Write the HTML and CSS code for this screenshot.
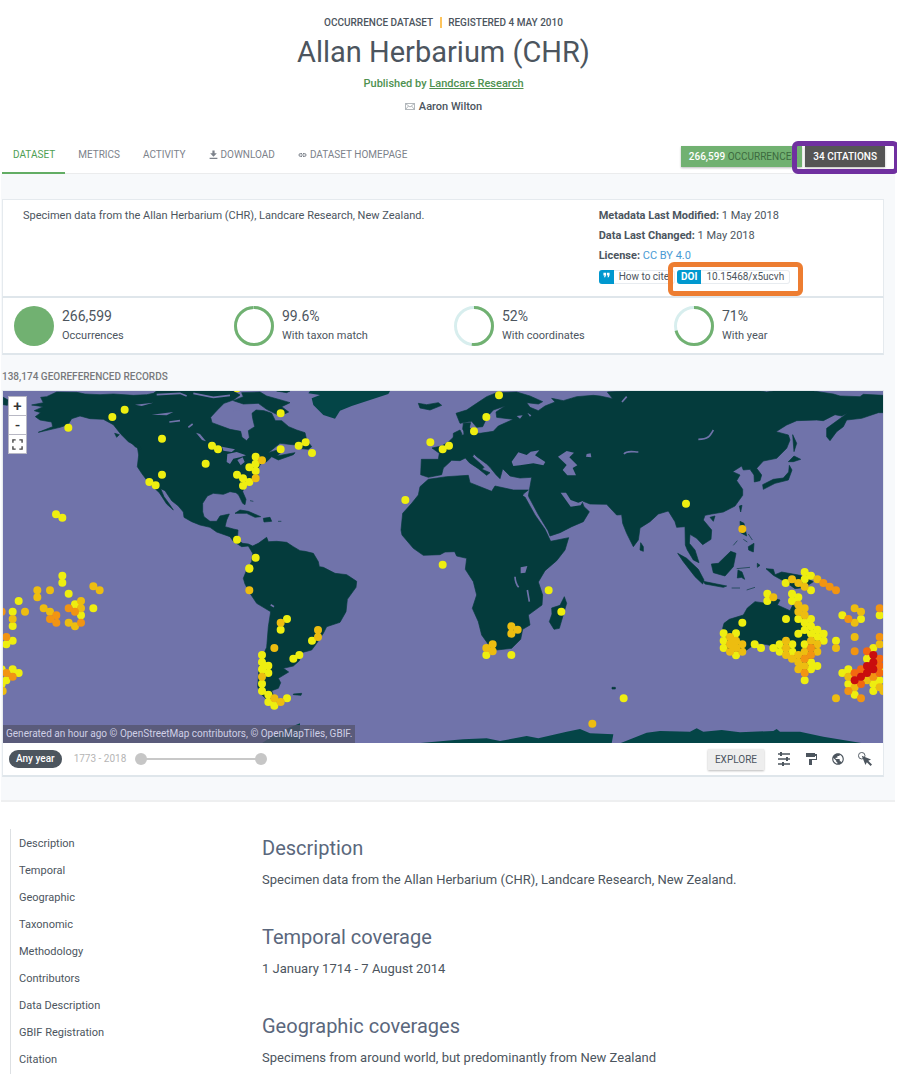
FILE: index.html
```html
<!DOCTYPE html>
<html lang="en">
<head>
<meta charset="utf-8">
<title>Allan Herbarium (CHR)</title>
<link rel="stylesheet" href="styles.css">
</head>
<body>
<header class="head">
  <p class="kicker"><span>Occurrence dataset</span><span class="kicker-date">Registered 4 May 2010</span></p>
  <h1 class="title">Allan Herbarium (CHR)</h1>
  <p class="publisher">Published by <a href="#publisher">Landcare Research</a></p>
  <p class="contact"><svg class="mail" viewBox="0 0 20 14"><path d="M1 1h18v12H1zM1 1l9 7 9-7M1 13l6-7M19 13l-6-7"/></svg>Aaron Wilton</p>
</header>

<nav class="tabs">
  <a class="tab tab-on" href="#dataset">Dataset</a>
  <a class="tab" href="#metrics">Metrics</a>
  <a class="tab" href="#activity">Activity</a>
  <a class="tab" href="#download"><svg class="tab-icon" viewBox="0 0 16 18"><path fill="currentColor" d="M6 1h4v5h4l-6 6-6-6h4zM1 14h14v2H1z"/></svg>Download</a>
  <a class="tab" href="#homepage"><svg class="tab-icon" viewBox="0 0 18 18"><path fill="none" stroke="currentColor" stroke-width="2" d="M8 6H5a3 3 0 0 0 0 6h3M10 6h3a3 3 0 0 1 0 6h-3M5 9h8"/></svg>Dataset homepage</a>
  <div class="counts">
    <a class="count count-green" href="#occurrences"><b>266,599</b> Occurrences</a>
    <span class="marked"><a class="count count-dark" href="#citations"><b>34 Citations</b></a><span class="mark mark-purple"></span></span>
  </div>
</nav>

<main class="panel">
  <section class="card about">
    <p class="about-text">Specimen data from the Allan Herbarium (CHR), Landcare Research, New Zealand.</p>
    <div class="facts">
      <p><b>Metadata Last Modified:</b> 1 May 2018</p>
      <p><b>Data Last Changed:</b> 1 May 2018</p>
      <p><b>License:</b> <a class="license" href="#license">CC BY 4.0</a></p>
      <div class="badges">
        <a class="badge" href="#cite"><span class="badge-key"><svg class="quote" viewBox="0 0 16 12"><path fill="currentColor" d="M1 1h6v5L5 11H2l2-4H1zM9 1h6v5l-2 5h-3l2-4H9z"/></svg></span><span class="badge-val">How to cite</span></a>
        <span class="marked"><a class="badge" href="#doi"><span class="badge-key"><b>DOI</b></span><span class="badge-val">10.15468/x5ucvh</span></a><span class="mark mark-orange"></span></span>
      </div>
    </div>
  </section>

  <section class="card stats">
    <div class="stat"><svg class="ring" viewBox="0 0 40 40"><circle cx="20" cy="20" r="20" fill="#71b171"/></svg><p><span class="num">266,599</span>Occurrences</p></div>
    <div class="stat"><svg class="ring" viewBox="0 0 40 40"><circle class="ring-bg" cx="20" cy="20" r="18.5"/><circle class="ring-fg" cx="20" cy="20" r="18.5" pathLength="100" stroke-dasharray="99.6 100"/></svg><p><span class="num">99.6%</span>With taxon match</p></div>
    <div class="stat"><svg class="ring" viewBox="0 0 40 40"><circle class="ring-bg" cx="20" cy="20" r="18.5"/><circle class="ring-fg" cx="20" cy="20" r="18.5" pathLength="100" stroke-dasharray="52 100"/></svg><p><span class="num">52%</span>With coordinates</p></div>
    <div class="stat"><svg class="ring" viewBox="0 0 40 40"><circle class="ring-bg" cx="20" cy="20" r="18.5"/><circle class="ring-fg" cx="20" cy="20" r="18.5" pathLength="100" stroke-dasharray="71 100"/></svg><p><span class="num">71%</span>With year</p></div>
  </section>

  <h2 class="map-title">138,174 georeferenced records</h2>

  <section class="card map-card">
    <div class="map">
      <svg class="world" viewBox="9 33 2640 1056">
        <g class="land">
          <path d="M95 75L130 68 122 52 140 50 170 36 230 37 255 42 300 44 340 42 400 46 440 44 460 40 470 33H700L720 45 700 60 672 70 650 92 632 112 636 128 690 148 722 154 726 172 740 182 748 172 745 152 764 140 758 115 756 100 768 90 792 92 815 100 826 122 845 122 866 140 890 150 915 158 920 180 935 200 925 208 895 205 886 195 840 190 805 218 845 206 848 214 830 228 885 218 880 224 835 240 815 230 800 245 782 252 770 272 775 288 755 300 735 315 728 335 738 358 735 374 728 370 716 345 708 338 690 335 670 343 640 340 622 348 608 370 608 395 612 410 630 424 650 424 660 408 688 402 680 420 675 440 700 447 714 450 712 480 728 490 745 492 758 498 775 490 800 472 805 485 830 484 860 487 880 500 900 512 915 514 940 520 955 545 958 560 970 562 1005 580 1040 584 1070 604 1068 622 1042 658 1038 695 1020 727 980 740 970 760 950 790 935 810 905 818 898 842 880 858 850 865 866 876 835 895 842 908 835 925 815 932 825 960 800 958 780 940 773 920 778 850 800 802 805 740 812 695 795 685 770 670 750 640 735 612 730 595 740 570 755 545 758 520 745 498 725 500 700 484 690 470 650 456 630 442 600 435 575 425 552 412 550 396 535 378 515 362 495 332 482 326 492 350 508 372 520 390 500 372 478 338 465 326 440 300 425 280 412 260 416 225 412 200 385 185 362 162 340 134 310 118 270 116 240 108 215 116 204 134 180 142 115 157 158 140 155 126 120 120 106 110 122 98 103 92 130 80Z"/>
          <path d="M700 62L730 50 725 38 780 36 800 48 850 62 870 68 845 80 866 96 840 108 800 88 775 70 730 72ZM10 52L24 60 22 76 10 74ZM830 33H870L860 38ZM705 400L720 390 745 394 782 410 765 412 740 400ZM790 415L810 412 815 424 792 426ZM834 424h10M344 160L358 164 350 172ZM390 183L418 195 426 210 405 200ZM750 362l10 2M880 942L905 940 903 946 880 944Z"/>
          <path d="M1255 70L1280 74 1315 68 1325 76 1290 90 1260 84ZM1390 130L1412 128 1408 142 1418 152 1440 172 1430 182 1392 186 1404 166 1388 148ZM1360 160L1380 150 1386 162 1378 178 1360 176ZM1424 190L1440 182 1444 200 1410 202ZM1491 242h8v10h-8zM1491 256h9v16h-9zM1524 276L1548 274 1546 286ZM1604 298l20 3M1668 302l14-4"/>
          <path d="M1368 100L1400 90 1430 70 1460 50 1490 38 1550 36 1590 48 1628 65 1615 72 1580 68 1590 82 1615 92 1635 78 1665 66 1655 55 1690 62 1730 50 1780 46 1800 48 1838 56 1822 36 1880 33H2280L2300 36 2320 33H2440L2500 42 2520 48 2580 50 2590 43 2650 46V98L2635 98 2585 115 2540 120 2530 140 2510 155 2490 182 2480 170 2480 145 2542 100 2525 108 2505 104 2470 122 2450 120 2390 122 2360 135 2328 155 2365 165 2370 180 2360 205 2330 235 2290 243 2270 265 2285 285 2280 302 2263 306 2262 285 2250 268 2230 270 2225 258 2198 275 2220 285 2210 302 2228 328 2228 346 2205 378 2170 396 2135 402 2115 406 2110 420 2135 450 2133 478 2108 494 2090 475 2070 463 2068 490 2085 510 2097 548 2080 540 2062 510 2056 495 2055 440 2030 442 2025 425 2005 393 1975 402 1950 425 1920 444 1915 480 1900 500 1880 460 1868 430 1865 404 1850 405 1820 373 1770 372 1745 362 1752 380 1768 395 1750 425 1715 440 1680 458 1650 468 1644 452 1615 404 1585 348 1595 292 1560 294 1530 288 1508 266 1505 278 1500 296 1488 284 1470 262 1460 252 1430 230 1422 222 1418 230 1440 250 1452 262 1446 268 1470 278 1460 286 1435 266 1408 248 1396 234 1380 242 1355 241 1330 264 1325 284 1285 292 1262 284 1264 238 1315 238 1318 220 1296 204 1325 198 1345 186 1362 170 1392 164 1390 140 1408 134 1406 158 1440 160 1480 154 1495 138 1540 118 1490 112 1488 96 1515 78 1480 90 1462 110 1448 140 1430 142 1415 124 1380 130Z"/>
          <path d="M1285 298L1340 290 1405 286 1410 308 1475 334 1485 318 1540 330 1585 330 1570 342 1605 405 1635 448 1652 484 1706 473 1695 510 1670 542 1635 572 1615 606 1628 645 1626 675 1585 705 1590 735 1568 748 1562 778 1535 805 1490 810 1470 800 1445 765 1435 725 1417 685 1430 645 1420 605 1396 568 1400 535 1370 528 1364 515 1335 516 1320 524 1270 526 1240 505 1206 465 1203 450 1208 400 1235 370 1255 345 1260 320ZM1693 650L1700 670 1678 745 1662 748 1648 725 1656 702 1655 684 1680 676Z"/>
          <path d="M1922 488L1930 500 1930 514 1920 510ZM2033 520L2060 535 2095 568 2112 600 2108 612 2085 590 2050 545ZM2110 604L2150 612 2180 618 2170 622 2115 612ZM2134 552L2155 550 2192 514 2208 520 2200 560 2175 588 2140 578ZM2210 566l40-4M2214 570L2226 576 2234 598 2224 592 2212 594ZM2298 566L2320 568 2325 584 2345 576 2400 586 2440 605 2415 622 2385 626 2360 608 2320 586ZM2272 550L2280 556 2272 562ZM2220 424L2232 430 2240 468 2222 458ZM2218 378L2226 376 2222 396ZM2230 478l12 8M2245 500L2262 490 2260 516 2246 510ZM2130 412L2145 408 2140 424ZM2378 164L2390 190 2382 215ZM2365 245L2382 228 2402 238 2380 245ZM2368 256L2376 270 2365 300 2325 310 2290 328 2288 314 2320 298 2350 294 2366 276ZM1836 922h10v5h-10zM2195 624h25M2240 630l25-8M2245 462l12 18M2200 496l12-14"/>
          <path d="M2168 745L2172 730 2188 718 2230 705 2242 684 2265 665 2300 670 2320 655 2340 660 2332 675 2370 692 2378 676 2390 680 2400 710 2450 750 2460 790 2440 830 2420 865 2400 850 2375 840 2350 825 2345 810 2310 796 2270 788 2240 810 2210 825 2175 810 2175 770ZM2402 868L2422 868 2412 884Z"/>
        </g>
        <path class="ice" d="M925 40L960 45 935 55 940 75 970 105 1005 116 1020 92 1055 78 1110 60 1165 42 1170 33H930ZM785 1090L830 1060 870 1042 900 1030V1090ZM1250 1090L1390 1078 1460 1075 1500 1083 1580 1068 1615 1075 1700 1055 1740 1047 1770 1060 1840 1063 1835 1090ZM1860 1090L1940 1058 1980 1053 2070 1055 2090 1045 2110 1055 2165 1050 2220 1057 2320 1053 2330 1047 2340 1055 2400 1055 2470 1070 2590 1090Z"/>
        <g class="water">
          <path d="M1535 245L1555 217 1580 225 1592 215 1618 211 1605 226 1636 246 1630 256 1600 250 1560 256 1540 258ZM1674 230L1700 213 1722 218 1708 232 1732 256 1718 264 1728 286 1702 286 1688 270 1700 255ZM1760 222L1772 220 1774 232 1758 230ZM1682 338L1698 338 1712 360 1735 368 1750 362 1742 376 1712 380ZM1562 562L1582 558 1576 578 1562 580ZM682 222L710 216 738 226 720 232 700 236 690 252 680 246ZM712 240L728 232 734 246 722 256ZM666 200L705 208 695 216 670 212ZM588 158L600 162 618 184 606 180ZM455 104L520 96 500 106ZM405 74L460 68 425 78ZM692 82L730 88 700 94ZM1550 108L1568 106 1560 116ZM1582 98L1594 106 1590 110Z"/>
          <path class="river" d="M2095 178C2125 178 2130 168 2140 150M1872 222C1880 210 1900 216 1915 216M1545 590Q1546 610 1556 622M1582 630L1588 665M565 142L578 132M508 126L540 122M812 674L822 680M1570 345L1584 352M1866 66L1880 50M470 44L540 40 560 48M580 40L640 52 690 46"/>
        </g>
        <g class="dots">
          <path class="y" d="M711 25h0M374 89h0M337 111h0M205 143h0M486 176h0M636 197h0M654 208h0M617 251h0M486 284h0M448 306h0M467 316h0M842 100h0M842 208h0M896 197h0M917 187h0M936 219h0M767 230h0M767 251h0M748 262h0M767 273h0M711 284h0M729 295h0M748 306h0M729 317h0M168 403h0M187 413h0M711 479h0M767 533h0M748 565h0M1497 46h0M1459 111h0M1422 154h0M1291 187h0M1347 197h0M1328 208h0M1216 360h0M1328 554h0M2058 371h0"/>
          <path class="y" d="M187 587h0M187 608h0M206 641h0M56 663h0M38 695h0M38 738h0M38 782h0M19 793h0M225 673h0M280 685h0M243 706h0M38 868h0M56 879h0M19 901h0M5 868h0M5 912h0M861 717h0M842 749h0M748 566h0M786 825h0M786 847h0M786 868h0M805 857h0M805 879h0M786 911h0M786 933h0M805 944h0M805 966h0M823 977h0M861 955h0M880 836h0M898 825h0M936 782h0M1459 825h0M1534 825h0M1646 631h0M1684 695h0M1871 955h0"/>
          <path class="y" d="M2414 576h0M2433 587h0M2414 598h0M2357 609h0M2433 631h0M2302 641h0M2302 663h0M2376 641h0M2395 652h0M2376 663h0M2358 717h0M2395 717h0M2414 728h0M2433 717h0M2433 739h0M2414 750h0M2433 761h0M2395 761h0M2452 749h0M2452 771h0M2471 761h0M2471 782h0M2227 728h0M2171 760h0M2208 760h0M2171 782h0M2171 804h0M2208 826h0M2264 793h0M2283 804h0M2320 804h0M2339 793h0M2339 815h0M2377 793h0M2377 815h0M2414 793h0M2433 847h0M2452 858h0M2433 868h0M2414 901h0M2508 782h0M2527 706h0M2583 717h0M2639 706h0M2620 804h0M2601 836h0M2527 879h0M2545 868h0M2545 912h0M2564 944h0M2620 912h0M2639 901h0M2620 933h0M2648 868h0"/>
          <path class="a" d="M786 241h0M767 295h0M112 631h0M150 631h0M112 652h0M280 619h0M299 631h0M75 695h0M38 717h0M131 685h0M150 695h0M243 663h0M243 685h0M206 728h0M225 739h0M8 933h0M748 631h0M842 728h0M823 804h0M786 890h0M823 955h0M842 966h0M954 750h0M954 771h0M1534 739h0M1553 749h0M1534 761h0M1478 793h0M1459 804h0M1478 814h0M1777 1031h0M2227 447h0"/>
          <path class="a" d="M2376 598h0M2395 609h0M2414 620h0M2452 598h0M2320 652h0M2395 674h0M2395 695h0M2414 685h0M2414 706h0M2190 771h0M2208 782h0M2190 793h0M2208 804h0M2190 815h0M2227 793h0M2227 815h0M2358 782h0M2358 804h0M2358 825h0M2376 836h0M2395 825h0M2395 847h0M2395 868h0M2414 858h0M2414 815h0M2433 782h0M2452 793h0M2452 815h0M2508 804h0M2508 955h0M2564 685h0M2583 695h0M2564 728h0M2564 771h0M2639 793h0M2545 890h0M2564 922h0M2601 901h0M2639 922h0M2650 933h0"/>
          <path class="o" d="M206 685h0M225 695h0M169 706h0M150 717h0M169 728h0M243 728h0M19 771h0M19 879h0M38 890h0M5 695h0M2470 609h0M2489 620h0M2508 631h0M2433 804h0M2433 825h0M2414 836h0M2414 879h0M2545 717h0M2639 685h0M2639 771h0M2564 814h0M2620 890h0M2545 933h0M2583 955h0"/>
          <path class="d" d="M2601 814h0M2639 836h0M2639 857h0M2639 879h0M2583 868h0M2564 879h0M2583 912h0"/>
          <path class="r" d="M2620 825h0M2620 847h0M2601 858h0M2620 868h0M2601 879h0M2583 890h0M2564 901h0"/>
        </g>
      </svg>
      <div class="zoom">
        <button class="zoom-btn">+</button>
        <button class="zoom-btn">-</button>
        <button class="zoom-btn" aria-label="Fullscreen"><svg class="full" viewBox="0 0 12 12"><path d="M1 4V1h3M8 1h3v3M11 8v3H8M4 11H1V8"/></svg></button>
      </div>
      <p class="credit">Generated an hour ago © OpenStreetMap contributors, © OpenMapTiles, GBIF.</p>
    </div>
    <div class="map-bar">
      <button class="any">Any year</button>
      <span class="years">1773 - 2018</span>
      <svg class="range" viewBox="0 0 132 12"><path d="M6 6h120" stroke="#c8c8c8" stroke-width="2"/><circle cx="6" cy="6" r="6" fill="#c6c6c6"/><circle cx="126" cy="6" r="6" fill="#c6c6c6"/></svg>
      <div class="tools">
        <button class="explore">Explore</button>
        <button class="tool" aria-label="Filters"><svg viewBox="0 0 14 14"><path fill="none" stroke="currentColor" stroke-width="1.4" d="M1 2h12M1 7h12M1 12h12"/><path fill="currentColor" d="M3 0h2v4H3zM9 5h2v4H9zM5 10h2v4H5z"/></svg></button>
        <button class="tool" aria-label="Style"><svg viewBox="0 0 14 14"><path fill="currentColor" d="M2 1h9v1h2v6H8v5H5V7h7V4h-1v1H2z"/></svg></button>
        <button class="tool" aria-label="Projection"><svg viewBox="0 0 24 24"><path fill="currentColor" d="M12 2C6.500 2 2 6.500 2 12s4.500 10 10 10 10-4.500 10-10S17.500 2 12 2zm-1 17.900C7 19.400 4 16.100 4 12c0-.6.100-1.200.2-1.800L9 15v1c0 1.100.9 2 2 2v1.900zm6.900-2.500c-.3-.8-1-1.400-1.900-1.400h-1v-3c0-.6-.4-1-1-1H8v-2h2c.6 0 1-.4 1-1V7h2c1.100 0 2-.9 2-2v-.4c2.900 1.200 5 4.100 5 7.400 0 2.100-.8 4-2.100 5.400z"/></svg></button>
        <button class="tool" aria-label="Select"><svg viewBox="0 0 15 15"><circle cx="4" cy="4" r="3.500" fill="none" stroke="currentColor"/><path fill="currentColor" d="M4 4l10 4-3 1.500 4 4-1.500 1.500-4-4L8 14z"/></svg></button>
      </div>
    </div>
  </section>
</main>

<div class="body">
  <nav class="toc">
    <a href="#description">Description</a>
    <a href="#temporal">Temporal</a>
    <a href="#geographic">Geographic</a>
    <a href="#taxonomic">Taxonomic</a>
    <a href="#methodology">Methodology</a>
    <a href="#contributors">Contributors</a>
    <a href="#data">Data Description</a>
    <a href="#registration">GBIF Registration</a>
    <a href="#citation">Citation</a>
  </nav>
  <div class="article">
    <section id="description"><h2>Description</h2><p>Specimen data from the Allan Herbarium (CHR), Landcare Research, New Zealand.</p></section>
    <section id="temporal"><h2>Temporal coverage</h2><p>1 January 1714 - 7 August 2014</p></section>
    <section id="geographic"><h2>Geographic coverages</h2><p>Specimens from around world, but predominantly from New Zealand</p></section>
  </div>
</div>
</body>
</html>
```
FILE: styles.css
```css
* { box-sizing: border-box; }
body { margin: 0; background: #fff; color: #4c555e; font: 11px/20px Roboto, "Liberation Sans", sans-serif; }
p, h1, h2 { margin: 0; }
a { color: inherit; text-decoration: none; }
button { border: 0; padding: 0; background: none; color: inherit; font: inherit; }

.head { padding: 13px 10px 0 0; text-align: center; font-weight: 500; }
.kicker { font-size: 10px; text-transform: uppercase; }
.kicker-date { margin-left: 7px; padding-left: 6px; border-left: 2px solid #fdc45c; }
.title { font-size: 29px; line-height: 38px; font-weight: 400; }
.publisher { margin-top: 3px; color: #4e9150; }
.publisher a { text-decoration: underline; }
.contact { margin-top: 3px; }
.mail { width: 10px; height: 7px; margin-right: 4px; fill: none; stroke: #9aa0a6; stroke-width: 1.5; }

.tabs { display: flex; height: 57px; margin: 0 2px; padding-right: 10px; border-bottom: 1px solid #ebeced; }
.tab { display: flex; align-items: center; height: 57px; margin-right: 2px; padding: 21px 10px 0 11px; border-bottom: 2px solid transparent; color: #7c828b; font-size: 10px; text-transform: uppercase; }
.tab-on { color: #4e9e52; border-color: #62ad64; }
.tab-icon { width: 9px; height: 10px; margin-right: 3px; }
.counts { display: flex; gap: 3px; height: 21px; margin: 29px 0 0 auto; }
.count { display: block; padding: 0 8px; font-size: 10px; line-height: 21px; text-transform: uppercase; box-shadow: 0 1px 2px #0004; }
.count b { color: #fff; font-weight: 500; }
.count-green { padding-right: 5px; background: #71b171; color: #3c6a3e; }
.count-dark { background: #555; }
.marked { position: relative; }
.mark { position: absolute; pointer-events: none; border: 5px solid; border-radius: 6px; }
.mark-purple { inset: -5px -14px -7px -13px; color: #7030a0; }
.mark-orange { inset: -8px -13px -12px -9px; color: #ed7d31; }

.panel { margin: 0 2px 0 1px; padding: 25px 11px 23px 1px; background: #f7f9fb; border-bottom: 2px solid #eeeff0; }
.card { background: #fff; border: 1px solid #e5eaee; border-bottom: 2px solid #dfe6eb; }
.about { display: flex; min-height: 99px; padding: 6px 20px; }
.about-text { flex: 577; }
.facts { flex: 265; }
.facts b { font-weight: 700; }
.license { color: #4a9ad4; }
.badges { display: flex; gap: 2px; margin-top: 4px; }
.badge { display: flex; font-size: 10px; line-height: 12px; white-space: nowrap; border: 1px solid #e8ecf0; border-left: 0; border-radius: 3px; }
.badge-key { margin: -1px 0; padding: 1px 4px; border-radius: 3px 0 0 3px; background: #0098cf; color: #fff; }
.badge-val { padding: 0 5px; }
.quote { width: 7px; height: 6px; margin-bottom: 2px; }
.stats { display: grid; grid-template-columns: repeat(4, 1fr); padding: 8px 0 7px; border-top: 0; }
.stat { display: flex; gap: 8px; align-items: center; padding-left: 11px; }
.ring { width: 40px; height: 40px; transform: rotate(-90deg); }
.ring circle { stroke-width: 3; }
.ring-bg { fill: none; stroke: #d8eeee; }
.ring-fg { fill: none; stroke: #71b171; }
.num { display: block; font-size: 14px; line-height: 20px; }

.map-title { margin: 13px 0 4px; color: #77797c; font-size: 10px; line-height: 18px; font-weight: 500; text-transform: uppercase; }
.map { position: relative; background: #7073aa; }
.world { display: block; width: 100%; }
.land { fill: #043b3c; stroke: #043b3c; stroke-width: 2; stroke-linejoin: round; }
.ice { fill: #044547; }
.water { fill: #7073aa; }
.river { fill: none; stroke: #7073aa; stroke-width: 5; }
.dots { fill: none; stroke-width: 24; stroke-linecap: round; }
.y { stroke: #eeee10; }
.a { stroke: #edbd10; }
.o { stroke: #f29412; }
.d { stroke: #f36910; }
.r { stroke: #c90d0d; }
.zoom { position: absolute; top: 5px; left: 5px; display: grid; gap: 1px; padding: 1px; background: #b8b8c4; }
.zoom-btn { width: 17px; height: 18px; background: #fff; color: #333; font-size: 15px; line-height: 18px; font-weight: 500; }
.full { display: block; width: 11px; margin: auto; fill: none; stroke: #444; stroke-width: 1.5; }
.credit { position: absolute; left: 0; bottom: 0; padding: 0 3px; background: #55556fcc; color: #cfcfe6; font-size: 10px; line-height: 18px; white-space: nowrap; }
.map-bar { display: flex; align-items: center; height: 32px; padding: 0 11px 0 6px; }
.any { padding: 0 7px; border-radius: 9px; background: #4c555e; color: #fff; font-size: 10px; line-height: 18px; font-weight: 500; }
.years { margin: 0 9px 0 12px; color: #b5b5b5; font-size: 10px; }
.range { width: 132px; height: 12px; }
.tools { display: flex; align-items: center; gap: 13px; margin-left: auto; }
.explore { padding: 0 7px; background: #eee; font-size: 10px; line-height: 21px; text-transform: uppercase; box-shadow: 0 1px 2px #0004; }
.tool { width: 14px; height: 14px; }
.tool svg { display: block; width: 14px; height: 14px; }

.body { display: grid; grid-template-columns: 252px 1fr; padding: 27px 10px 5px; }
.toc { border-left: 1px solid #dde0e3; padding: 1px 0 1px 8px; }
.toc a { display: block; line-height: 27px; }
.article { font-size: 13px; }
.article section { margin-bottom: 28px; }
.article section:last-child { margin-bottom: 0; }
.article h2 { margin-bottom: 3px; color: #5a677c; font-size: 20px; line-height: 38px; font-weight: 400; }
```
